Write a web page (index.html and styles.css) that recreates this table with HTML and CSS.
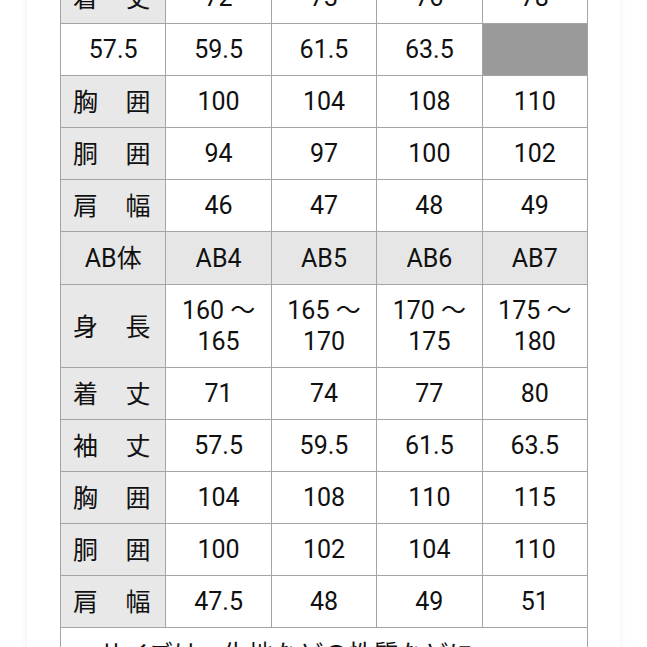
FILE: index.html
```html
<!DOCTYPE html>
<html lang="ja">
<head>
<meta charset="utf-8">
<link rel="stylesheet" href="styles.css">
</head>
<body>
<div class="card">
  <table class="size-table">
    <colgroup><col><col><col><col><col></colgroup>
    <tr><td class="label"><span>着</span><span>丈</span></td><td>72</td><td>73</td><td>76</td><td>78</td></tr>
    <tr><td>57.5</td><td>59.5</td><td>61.5</td><td>63.5</td><td class="blank"></td></tr>
    <tr><td class="label"><span>胸</span><span>囲</span></td><td>100</td><td>104</td><td>108</td><td>110</td></tr>
    <tr><td class="label"><span>胴</span><span>囲</span></td><td>94</td><td>97</td><td>100</td><td>102</td></tr>
    <tr><td class="label"><span>肩</span><span>幅</span></td><td>46</td><td>47</td><td>48</td><td>49</td></tr>
    <tr class="head"><td>AB体</td><td>AB4</td><td>AB5</td><td>AB6</td><td>AB7</td></tr>
    <tr class="tall"><td class="label"><span>身</span><span>長</span></td><td>160 〜<br>165</td><td>165 〜<br>170</td><td>170 〜<br>175</td><td>175 〜<br>180</td></tr>
    <tr><td class="label"><span>着</span><span>丈</span></td><td>71</td><td>74</td><td>77</td><td>80</td></tr>
    <tr><td class="label"><span>袖</span><span>丈</span></td><td>57.5</td><td>59.5</td><td>61.5</td><td>63.5</td></tr>
    <tr><td class="label"><span>胸</span><span>囲</span></td><td>104</td><td>108</td><td>110</td><td>115</td></tr>
    <tr><td class="label"><span>胴</span><span>囲</span></td><td>100</td><td>102</td><td>104</td><td>110</td></tr>
    <tr><td class="label"><span>肩</span><span>幅</span></td><td>47.5</td><td>48</td><td>49</td><td>51</td></tr>
    <tr class="note"><td colspan="5">サイズは、生地などの性質などに</td></tr>
  </table>
</div>
</body>
</html>
```
FILE: styles.css
```css
html, body {
  margin: 0;
  padding: 0;
  background: #ffffff;
  overflow: hidden;
}
body {
  height: 647px;
}
.card {
  margin: -29px 0 0 27px;
  width: 527px;
  padding: 0 33px 40px 33px;
  background: #ffffff;
  box-shadow: 0 0 7px rgba(0, 0, 0, 0.07);
}
.size-table {
  border-collapse: collapse;
  width: 528px;
  table-layout: fixed;
  font-family: Roboto, "Noto Sans CJK JP", sans-serif;
  font-size: 25px;
  color: #111111;
}
.size-table td {
  border: 1px solid #a4a4a4;
  height: 51px;
  padding: 0;
  text-align: center;
  vertical-align: middle;
  line-height: 31px;
  background: #ffffff;
}
.size-table td.label {
  background: #e8e8e8;
  padding: 0 15px 0 12px;
  text-align: justify;
  text-align-last: justify;
}
.size-table td.label span {
  font-family: "Noto Sans CJK JP", sans-serif;
}
.size-table td.blank {
  background: #9a9a9a;
}
.size-table tr.head td {
  background: #e6e6e6;
  height: 52px;
}
.size-table tr.tall td {
  height: 82px;
}
.size-table tr.note td {
  text-align: left;
  vertical-align: top;
  font-family: "Noto Sans CJK JP", sans-serif;
  padding: 9px 0 0 38px;
  height: 60px;
}
```
